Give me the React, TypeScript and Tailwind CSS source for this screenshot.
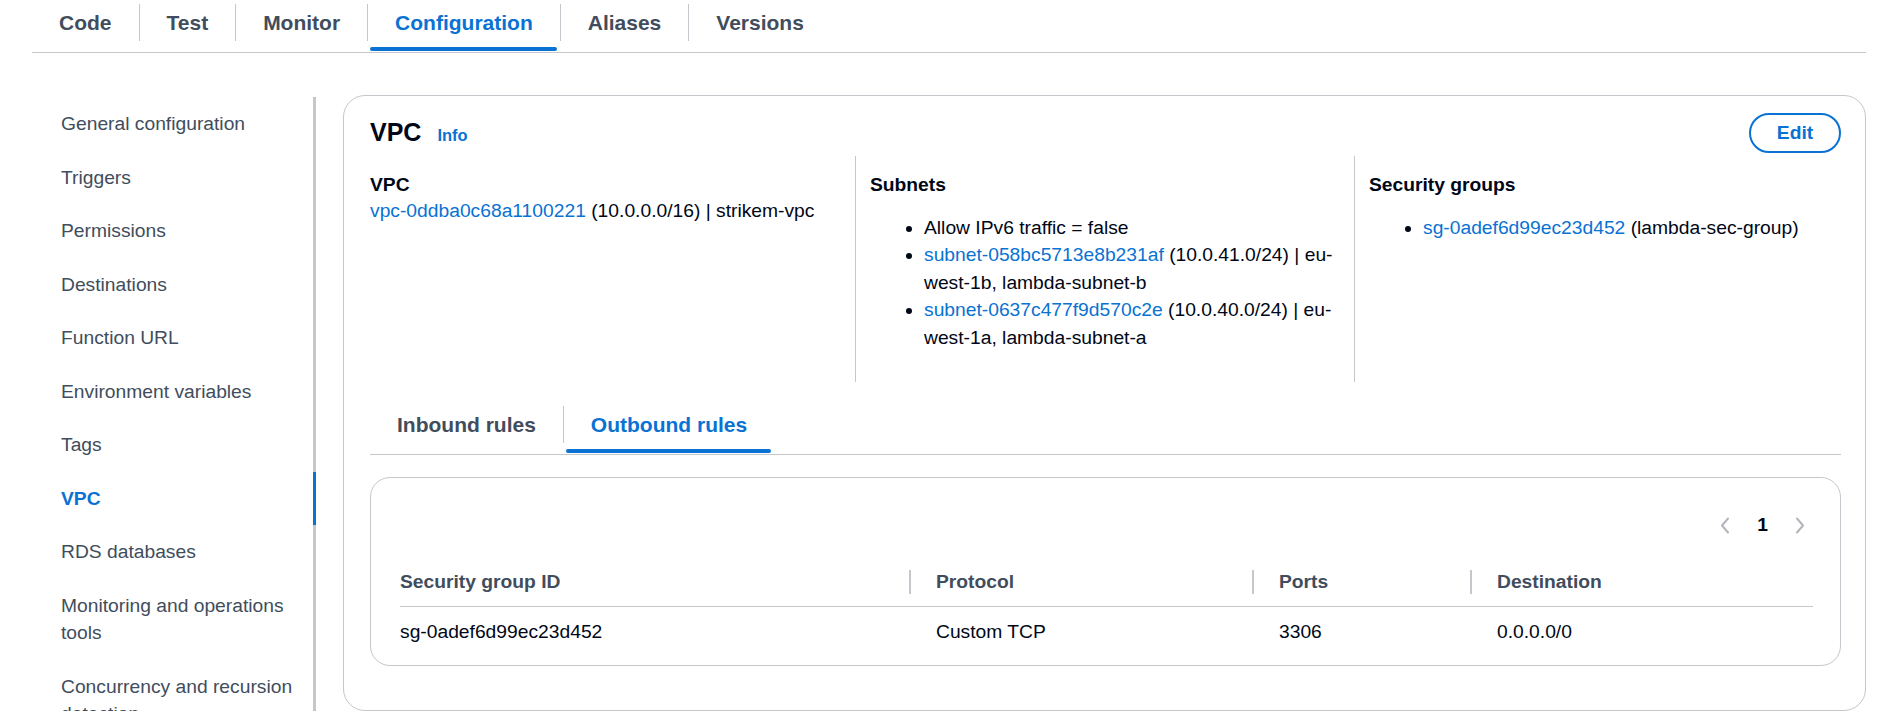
import React from "react";

const BLUE = "text-[#0972d3]";

const topTabs = ["Code", "Test", "Monitor", "Configuration", "Aliases", "Versions"];

const navItems = [
  "General configuration",
  "Triggers",
  "Permissions",
  "Destinations",
  "Function URL",
  "Environment variables",
  "Tags",
  "VPC",
  "RDS databases",
  "Monitoring and operations tools",
  "Concurrency and recursion detection",
];

function Tabs({ tabs, active }: { tabs: string[]; active: string }) {
  return (
    <div className="flex border-b border-[#c6c6cd]">
      {tabs.map((tab, i) => {
        const isActive = tab === active;
        return (
          <div key={tab} className="relative pt-[4px] pb-[11px]">
            <div
              className={
                "flex h-[37px] items-center px-[27px] text-[21px] font-bold " +
                (i > 0 ? "border-l border-[#c6c6cd] " : "") +
                (isActive ? "text-[#0972d3]" : "text-[#414d5c]")
              }
            >
              {tab}
            </div>
            {isActive && (
              <div className="absolute bottom-[1px] left-[3px] right-[3px] h-[4px] rounded-sm bg-[#0972d3]" />
            )}
          </div>
        );
      })}
    </div>
  );
}

function Chevron({ dir }: { dir: "left" | "right" }) {
  return (
    <svg width="12" height="17" viewBox="0 0 12 17" fill="none" className="text-[#b4b4bb]">
      <polyline
        points={dir === "left" ? "9,1.5 3,8.5 9,15.5" : "3,1.5 9,8.5 3,15.5"}
        stroke="currentColor"
        strokeWidth="2"
        strokeLinecap="round"
        strokeLinejoin="round"
      />
    </svg>
  );
}

function Sidebar() {
  return (
    <nav className="mt-[1px] w-[316px] shrink-0">
      <ul className="pt-[1px]">
        {navItems.map((item) => {
          const isActive = item === "VPC";
          return (
            <li
              key={item}
              className={
                "border-r-[3px] py-[13px] pl-[61px] pr-[12px] " +
                (isActive ? "border-[#0972d3] font-bold text-[#0972d3]" : "border-[#c6c6cd] text-[#414d5c]")
              }
            >
              {item}
            </li>
          );
        })}
      </ul>
    </nav>
  );
}

function RulesTable() {
  const headers = ["Security group ID", "Protocol", "Ports", "Destination"];
  const row = ["sg-0adef6d99ec23d452", "Custom TCP", "3306", "0.0.0.0/0"];
  const grid = "grid grid-cols-[509px_343px_218px_1fr]";

  return (
    <div className="mt-[22px] rounded-[20px] border border-[#c6c6cd] pb-[11px] pl-[29px] pr-[27px] pt-[29px]">
      <div className="flex h-[36px] items-center justify-end gap-[26px] pr-[7px]">
        <Chevron dir="left" />
        <span className="font-bold text-[#000716]">1</span>
        <Chevron dir="right" />
      </div>

      <div className={grid + " mt-[13px] h-[51px] border-b border-[#c6c6cd] pt-[2px]"}>
        {headers.map((h, i) => (
          <div key={h} className={"relative flex items-center font-bold text-[#414d5c] " + (i > 0 ? "pl-[27px]" : "")}>
            {i > 0 && <span className="absolute left-0 top-1/2 h-[24px] w-[2px] -translate-y-1/2 bg-[#c6c6cd]" />}
            {h}
          </div>
        ))}
      </div>

      <div className={grid + " h-[47px] pt-[3px]"}>
        {row.map((c, i) => (
          <div key={i} className={"flex items-center text-[#000716] " + (i > 0 ? "pl-[27px]" : "")}>
            {c}
          </div>
        ))}
      </div>
    </div>
  );
}

function VpcCard() {
  return (
    <section className="mr-[18px] mt-[42px] flex-1 rounded-[22px] border border-[#c6c6cd] pb-[44px] pl-[26px] pr-[24px] pt-[17px]">
      {/* Header */}
      <div className="flex items-center justify-between">
        <div className="flex items-baseline">
          <h2 className="text-[25px] font-bold leading-[30px] text-[#000716]">VPC</h2>
          <span className={"ml-[16px] text-[16.5px] font-bold " + BLUE}>Info</span>
        </div>
        <button className="h-[40px] w-[92px] rounded-full border-2 border-[#0972d3] font-bold text-[#0972d3]">
          Edit
        </button>
      </div>

      {/* Details */}
      <div className="mt-[3px] grid grid-cols-[485px_499px_1fr] text-[#000716]">
        <div className="pb-[31px] pt-[15.5px]">
          <div className="font-bold leading-[25px]">VPC</div>
          <div>
            <span className={BLUE}>vpc-0ddba0c68a1100221</span> (10.0.0.0/16) | strikem-vpc
          </div>
        </div>

        <div className="border-l border-[#c6c6cd] pb-[31px] pl-[14px] pr-[8px] pt-[15.5px]">
          <div className="font-bold leading-[25px]">Subnets</div>
          <ul className="mt-[17px] list-disc pl-[54px]">
            <li>Allow IPv6 traffic = false</li>
            <li>
              <span className={BLUE}>subnet-058bc5713e8b231af</span> (10.0.41.0/24) | eu-west-1b, lambda-subnet-b
            </li>
            <li>
              <span className={BLUE}>subnet-0637c477f9d570c2e</span> (10.0.40.0/24) | eu-west-1a, lambda-subnet-a
            </li>
          </ul>
        </div>

        <div className="border-l border-[#c6c6cd] pb-[31px] pl-[14px] pt-[15.5px]">
          <div className="font-bold leading-[25px]">Security groups</div>
          <ul className="mt-[17px] list-disc pl-[54px]">
            <li>
              <span className={BLUE}>sg-0adef6d99ec23d452</span> (lambda-sec-group)
            </li>
          </ul>
        </div>
      </div>

      {/* Rules tabs */}
      <div className="mt-[20px]">
        <Tabs tabs={["Inbound rules", "Outbound rules"]} active="Outbound rules" />
      </div>

      <RulesTable />
    </section>
  );
}

export default function App() {
  return (
    <div
      className="h-[711px] w-[1884px] overflow-hidden bg-white text-[19.25px] leading-[27.5px] text-[#000716]"
      style={{ fontFamily: '"Liberation Sans", Arial, sans-serif' }}
    >
      <div className="ml-[32px] mr-[18px]">
        <Tabs tabs={topTabs} active="Configuration" />
      </div>

      <div className="flex items-start">
        <div className="mt-[42px]">
          <Sidebar />
        </div>
        <div className="ml-[27px] flex flex-1">
          <VpcCard />
        </div>
      </div>
    </div>
  );
}
